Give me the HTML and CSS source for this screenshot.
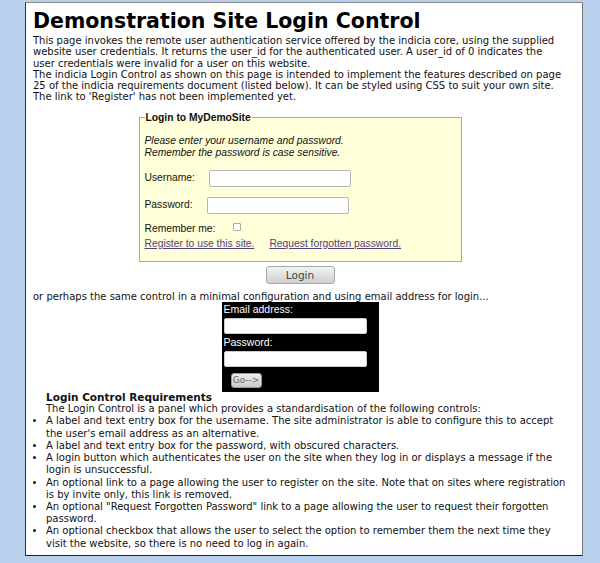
FILE: index.html
```html
<!DOCTYPE html>
<html>
<head>
<meta charset="utf-8">
<link rel="stylesheet" href="styles.css">
</head>
<body>
<div class="page">
  <h1 class="title">Demonstration Site Login Control</h1>
  <p class="intro">This page invokes the remote user authentication service offered by the indicia core, using the supplied website user credentials. It returns the user_id for the authenticated user. A user_id of 0 indicates the user credentials were invalid for a user on this website.<br>The indicia Login Control as shown on this page is intended to implement the features described on page 25 of the indicia requirements document (listed below). It can be styled using CSS to suit your own site. The link to 'Register' has not been implemented yet.</p>

  <fieldset class="login">
    <legend class="login-legend">Login to MyDemoSite</legend>
    <p class="login-hint">Please enter your username and password.<br>Remember the password is case sensitive.</p>
    <div class="row row-user"><span class="lbl">Username:</span><span class="input input-user"></span></div>
    <div class="row row-pass"><span class="lbl">Password:</span><span class="input input-pass"></span></div>
    <div class="row row-remember"><span class="lbl">Remember me:</span><span class="check"></span></div>
    <div class="links"><a class="link">Register to use this site.</a><a class="link link-forgot">Request forgotten password.</a></div>
  </fieldset>
  <div class="btn-wrap"><span class="btn-login">Login</span></div>

  <p class="or">or perhaps the same control in a minimal configuration and using email address for login...</p>

  <div class="mini">
    <div class="mini-lbl">Email address:</div>
    <div class="mini-input"></div>
    <div class="mini-lbl">Password:</div>
    <div class="mini-input"></div>
    <span class="btn-go">Go--&gt;</span>
  </div>

  <div class="req">
    <div class="req-head">Login Control Requirements</div>
    <div class="req-intro">The Login Control is a panel which provides a standardisation of the following controls:</div>
    <ul class="req-list">
      <li>A label and text entry box for the username. The site administrator is able to configure this to accept the user's email address as an alternative.</li>
      <li>A label and text entry box for the password, with obscured characters.</li>
      <li>A login button which authenticates the user on the site when they log in or displays a message if the login is unsuccessful.</li>
      <li>An optional link to a page allowing the user to register on the site. Note that on sites where registration is by invite only, this link is removed.</li>
      <li>An optional "Request Forgotten Password" link to a page allowing the user to request their forgotten password.</li>
      <li>An optional checkbox that allows the user to select the option to remember them the next time they visit the website, so there is no need to log in again.</li>
    </ul>
  </div>
</div>
</body>
</html>
```

FILE: styles.css
```css
html, body {
  margin: 0;
  padding: 0;
  background: #b9d0ec;
}
body {
  padding: 2px 17px 0 25px;
  height: 561px;
  font-family: "DejaVu Sans", sans-serif;
  font-size: 10px;
  line-height: 11.3px;
  color: #111;
}
.page {
  background: #fff;
  border-top: 1px solid #888;
  border-left: 1px solid #333;
  border-right: 1px solid #777;
  border-bottom: 1px solid #222;
  padding: 7px 15px 5px 7px;
}
.title {
  margin: 0;
  font-size: 20.5px;
  line-height: 23px;
  font-weight: bold;
  color: #000;
}
.intro {
  margin: 2px 0 0 0;
}
.login {
  width: 323px;
  box-sizing: border-box;
  margin: 9px auto 0;
  padding: 0 6px 11px 5px;
  background: #ffffd9;
  border: 1px solid #a8a8a0;
  font-family: "Liberation Sans", Arial, sans-serif;
  font-size: 10.3px;
  line-height: 12px;
  color: #111;
}
.login-legend {
  padding: 0 1px;
  margin-left: 0;
  font-weight: bold;
  font-size: 10.3px;
}
.login-hint {
  margin: 11px 0 0 0;
  font-style: italic;
}
.row {
  display: flex;
  align-items: center;
}
.row-user { margin-top: 11px; }
.row-pass { margin-top: 10px; }
.row-remember { margin-top: 9px; }
.lbl { display: inline-block; }
.row-user .lbl { width: 64px; }
.row-pass .lbl { width: 62px; }
.row-remember .lbl { width: 88px; }
.input {
  display: inline-block;
  width: 140px;
  height: 15px;
  background: #fff;
  border: 1px solid #b5b5b5;
  border-radius: 2px;
}
.check {
  display: inline-block;
  width: 6px;
  height: 6px;
  border: 1px solid #aaa;
  background: #fff;
  border-radius: 1px;
  margin-top: -4px;
}
.links {
  margin-top: 3px;
  display: flex;
  gap: 15px;
}
.link {
  color: #55407a;
  text-decoration: underline;
}
.btn-wrap {
  display: flex;
  justify-content: center;
  margin-top: 4px;
}
.btn-login {
  display: inline-block;
  width: 67px;
  height: 16px;
  line-height: 16px;
  text-align: center;
  border: 1px solid #a9a9a9;
  border-radius: 3px;
  background: linear-gradient(#f2f2f2, #d0d0d0);
  font-size: 10.5px;
  color: #444;
}
.or {
  margin: 7px 0 0 0;
}
.mini {
  width: 157px;
  box-sizing: border-box;
  margin: 0 auto;
  padding: 1px 12px 4px 2px;
  background: #000;
  color: #fff;
  font-family: "Liberation Sans", Arial, sans-serif;
  font-size: 10.5px;
  line-height: 12px;
}
.mini-input {
  height: 14px;
  background: #fff;
  border: 1px solid #ccc;
  border-radius: 2px;
  margin: 3px 0 2px 0;
}
.btn-go {
  display: inline-block;
  margin: 4px 0 0 7px;
  width: 29px;
  height: 13px;
  line-height: 13px;
  text-align: center;
  background: linear-gradient(#eee, #c9c9c9);
  border: 1px solid #999;
  border-radius: 3px;
  color: #666;
  font-family: "DejaVu Sans", sans-serif;
  font-size: 9px;
}
.req {
  margin-top: -1px;
  line-height: 12.2px;
}
.req-head {
  margin-left: 13px;
  font-weight: bold;
  font-size: 10.5px;
}
.req-intro {
  margin-left: 13px;
}
.req-list {
  margin: 0;
  padding-left: 13px;
}
```
